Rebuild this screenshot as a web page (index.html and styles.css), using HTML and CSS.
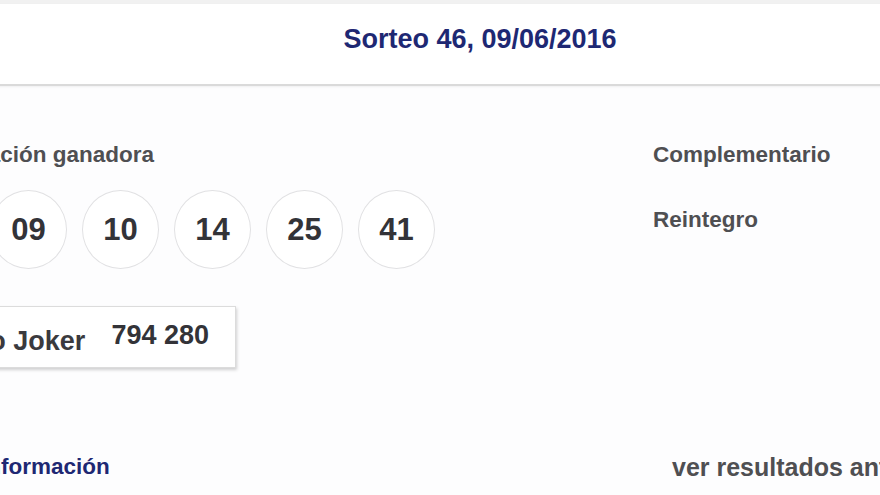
FILE: index.html
```html
<!DOCTYPE html>
<html lang="es">
<head>
<meta charset="utf-8">
<title>Sorteo 46, 09/06/2016</title>
<link rel="stylesheet" href="styles.css">
</head>
<body>
<div class="topband"></div>
<div class="page">
  <header class="header">
    <h1 class="title">Sorteo 46, 09/06/2016</h1>
  </header>
  <main class="content">
    <section class="left">
      <h2 class="label">Combinación ganadora</h2>
      <ul class="balls">
        <li class="ball">03</li>
        <li class="ball">09</li>
        <li class="ball">10</li>
        <li class="ball">14</li>
        <li class="ball">25</li>
        <li class="ball">41</li>
      </ul>
      <div class="joker">
        <span class="joker-label">Número Joker</span>
        <span class="joker-num">794 280</span>
      </div>
    </section>
    <section class="right">
      <div class="rlabel">Complementario</div>
      <div class="rlabel rlabel-2">Reintegro</div>
    </section>
  </main>
  <footer class="footer">
    <a class="more" href="#">Más información</a>
    <a class="prev" href="#">ver resultados anteriores</a>
  </footer>
</div>
</body>
</html>
```
FILE: styles.css
```css
html, body {
  margin: 0;
  padding: 0;
}
body {
  background: #fdfdfe;
  overflow: hidden;
  width: 880px;
  height: 495px;
  font-family: "Liberation Sans", Arial, sans-serif;
  font-weight: bold;
}
.topband {
  height: 4px;
  background: #f1f1f1;
}
.page {
  width: 1164px;
  margin-left: -102px;
}
.header {
  height: 58px;
  padding-top: 22px;
  background: #ffffff;
  border-bottom: 2px solid #dadada;
  box-shadow: 0 1px 2px rgba(0,0,0,0.06);
  text-align: center;
}
.title {
  margin: 0;
  font-size: 27px;
  line-height: 27px;
  color: #1e2873;
  font-weight: bold;
}
.content {
  display: grid;
  grid-template-columns: 755px 1fr;
}
.label {
  margin: 58px 0 0 6px;
  font-size: 22.5px;
  line-height: 22px;
  color: #4f4f52;
  font-weight: bold;
}
.balls {
  list-style: none;
  margin: 24px 0 0 0;
  padding: 0;
  display: flex;
  gap: 15px;
}
.ball {
  width: 75px;
  height: 77px;
  border: 1px solid #e1e1e3;
  border-radius: 50%;
  background: #ffffff;
  display: flex;
  align-items: center;
  justify-content: center;
  font-size: 31px;
  color: #333338;
}
.joker {
  box-sizing: border-box;
  margin-top: 37px;
  width: 338px;
  height: 62px;
  border: 1px solid #dcdcdc;
  background: #ffffff;
  box-shadow: 1px 2px 3px rgba(0,0,0,0.18);
  display: flex;
  align-items: center;
  justify-content: flex-end;
  gap: 26px;
  padding-right: 26px;
}
.joker-label {
  font-size: 27px;
  color: #3a3a3e;
  margin-top: 8px;
}
.joker-num {
  font-size: 27px;
  color: #333338;
  margin-bottom: 4px;
}
.right {
  padding-top: 58px;
}
.rlabel {
  font-size: 22.5px;
  line-height: 22px;
  color: #4f4f52;
}
.rlabel-2 {
  margin-top: 43px;
}
.footer {
  display: grid;
  grid-template-columns: 755px 1fr;
  margin-top: 88px;
}
.more {
  font-size: 22.5px;
  line-height: 22px;
  color: #1e2873;
  text-decoration: none;
  padding-left: 33px;
}
.prev {
  font-size: 25px;
  line-height: 22px;
  color: #4f4f52;
  text-decoration: none;
  padding-left: 19px;
  white-space: nowrap;
}
```
